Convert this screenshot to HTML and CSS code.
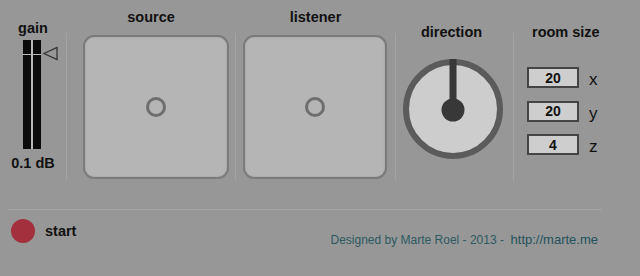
FILE: index.html
```html
<!DOCTYPE html>
<html lang="en">
<head>
    <meta charset="UTF-8">
    <meta name="viewport" content="width=device-width, initial-scale=1.0">
    <title>3D audio</title>
    <link rel="stylesheet" href="styles.css">
</head>
<body>
    <div class="panel">
        <div class="col gain">
            <h2 class="title">gain</h2>
            <div class="meter">
                <div class="bar"><span class="seg-top"></span><span class="seg-rest"></span></div>
                <div class="bar"><span class="seg-top"></span><span class="seg-rest"></span></div>
                <svg class="pointer" width="15" height="15" viewBox="0 0 15 15">
                    <polygon points="1,7.5 14,1.5 14,13.5" fill="none" stroke="#2e2e2e" stroke-width="1.2"/>
                </svg>
            </div>
            <div class="db">0.1 dB</div>
        </div>
        <div class="sep"></div>
        <div class="col source">
            <h2 class="title">source</h2>
            <div class="pad"><span class="dot"></span></div>
        </div>
        <div class="sep"></div>
        <div class="col listener">
            <h2 class="title">listener</h2>
            <div class="pad"><span class="dot"></span></div>
        </div>
        <div class="sep"></div>
        <div class="col direction">
            <h2 class="title">direction</h2>
            <svg class="knob" width="100" height="100" viewBox="0 0 100 100">
                <circle cx="50" cy="50" r="47" fill="#cdcdcd" stroke="#5b5b5b" stroke-width="6"/>
                <rect x="46.5" y="0" width="7" height="50" fill="#383838"/>
                <circle cx="50" cy="51" r="11.5" fill="#383838"/>
            </svg>
        </div>
        <div class="sep"></div>
        <div class="col room">
            <h2 class="title">room size</h2>
            <div class="dims">
                <div class="dim"><input class="num" type="text" value="20"><span class="axis">x</span></div>
                <div class="dim"><input class="num" type="text" value="20"><span class="axis">y</span></div>
                <div class="dim"><input class="num" type="text" value="4"><span class="axis">z</span></div>
            </div>
        </div>
    </div>
    <div class="rule"></div>
    <div class="footer">
        <button class="start"><span class="led"></span>start</button>
        <p class="credit">Designed by Marte Roel - 2013 - &nbsp;<a href="http://marte.me">http://marte.me</a></p>
    </div>
</body>
</html>
```

FILE: styles.css
```css
body {
    margin: 0;
    width: 640px;
    height: 276px;
    background-color: #979797;
    font-family: 'Liberation Sans', Arial, sans-serif;
    color: #111;
    overflow: hidden;
}
.panel {
    display: flex;
    height: 209px;
}
.title {
    margin: 0;
    font-size: 14.5px;
    line-height: 17px;
    font-weight: bold;
    text-align: center;
    color: #111;
}
.sep {
    flex-shrink: 0;
    width: 1px;
    height: 147px;
    margin-top: 33px;
    background-color: #a4a4a4;
}
.col {
    display: flex;
    flex-direction: column;
    flex-shrink: 0;
    box-sizing: border-box;
}
/* gain */
.gain {
    width: 66px;
    padding-top: 20px;
    align-items: center;
}
.meter {
    position: relative;
    display: flex;
    gap: 2px;
    width: 18px;
    height: 109px;
    margin: 3px 2px 0 0;
    background-color: #b9b9b9;
}
.bar {
    display: flex;
    flex-direction: column;
    gap: 1px;
    width: 8px;
}
.seg-top {
    height: 14px;
    background-color: #0b0b0b;
}
.seg-rest {
    flex: 1;
    background-color: #0b0b0b;
}
.pointer {
    position: absolute;
    left: 20px;
    top: 6px;
}
.db {
    margin-top: 6px;
    font-size: 14.5px;
    line-height: 17px;
    font-weight: bold;
}
/* pads */
.source {
    width: 168px;
    padding-top: 9px;
}
.listener {
    width: 159px;
    padding-top: 9px;
}
.pad {
    display: flex;
    align-items: center;
    justify-content: center;
    box-sizing: border-box;
    height: 144px;
    margin-top: 9px;
    background-color: #b5b5b5;
    border: 2px solid #7b7b7b;
    border-radius: 11px;
    box-shadow: inset 0 0 2px rgba(0,0,0,0.15);
}
.source .pad {
    width: 146px;
    margin-left: 16px;
}
.listener .pad {
    width: 144px;
    margin-left: 7px;
}
.dot {
    box-sizing: border-box;
    width: 20px;
    height: 20px;
    border: 3px solid #6e6e6e;
    border-radius: 50%;
}
/* direction */
.direction {
    width: 117px;
    padding-top: 24px;
}
.direction .title {
    padding-right: 6px;
}
.knob {
    margin: 18px 0 0 7px;
}
/* room size */
.room {
    width: 125px;
    padding: 24px 0 0 13px;
}
.room .title {
    text-align: left;
    padding-left: 5px;
}
.dims {
    display: flex;
    flex-direction: column;
    gap: 10.5px;
    margin-top: 26px;
}
.dim {
    display: flex;
    align-items: flex-start;
    gap: 10px;
}
.num {
    box-sizing: border-box;
    width: 52px;
    height: 21px;
    margin: 0;
    padding: 0;
    background-color: #cecece;
    border: 2px solid #444;
    font-family: 'Liberation Sans', Arial, sans-serif;
    font-size: 14px;
    font-weight: bold;
    text-align: center;
    color: #111;
}
.axis {
    margin-top: 2px;
    font-size: 17px;
    line-height: 21px;
    color: #111;
}
/* bottom */
.rule {
    width: 594px;
    height: 1px;
    margin-left: 8px;
    background-color: #a6a6a6;
}
.footer {
    display: flex;
    align-items: flex-start;
    padding: 9px 42px 0 11px;
}
.start {
    display: flex;
    align-items: center;
    gap: 10px;
    height: 24px;
    padding: 0;
    border: none;
    background: none;
    font-family: 'Liberation Sans', Arial, sans-serif;
    font-size: 14.5px;
    line-height: 17px;
    font-weight: bold;
    color: #111;
    cursor: pointer;
}
.led {
    width: 24px;
    height: 24px;
    border-radius: 50%;
    background-color: #a2303d;
}
.credit {
    margin: 13px 0 0 auto;
    font-size: 12px;
    line-height: 15px;
    color: #2d5a60;
}
.credit a {
    font-size: 13px;
    color: #22525a;
    text-decoration: none;
}
```
